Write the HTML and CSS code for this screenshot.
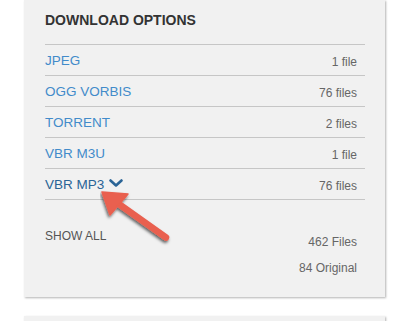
FILE: index.html
```html
<!DOCTYPE html>
<html lang="en">
<head>
    <meta charset="UTF-8">
    <meta name="viewport" content="width=device-width, initial-scale=1.0">
    <title>Download Options</title>
    <link rel="stylesheet" href="styles.css">
</head>
<body>
    <div class="card">
        <h2>DOWNLOAD OPTIONS</h2>
        <ul class="formats">
            <li><a href="#">JPEG</a><span class="count">1 file</span></li>
            <li><a href="#">OGG VORBIS</a><span class="count">76 files</span></li>
            <li><a href="#">TORRENT</a><span class="count">2 files</span></li>
            <li><a href="#">VBR M3U</a><span class="count">1 file</span></li>
            <li>
                <a href="#" class="open">VBR MP3
                    <svg class="chevron" width="14" height="9" viewBox="0 0 14 9">
                        <polyline points="1.5,1.5 7,6.5 12.5,1.5" fill="none" stroke="#2a6496" stroke-width="2.6" stroke-linecap="round" stroke-linejoin="round"/>
                    </svg>
                </a>
                <span class="count">76 files</span>
            </li>
        </ul>
        <div class="summary">
            <a href="#" class="show-all">SHOW ALL</a>
            <div class="totals">
                <div>462 Files</div>
                <div>84 Original</div>
            </div>
        </div>

        <!-- Annotation arrow -->
        <svg class="pointer" width="90" height="70" viewBox="0 0 90 70">
            <defs>
                <filter id="shade" x="-30%" y="-30%" width="160%" height="160%">
                    <feDropShadow dx="-1" dy="2" stdDeviation="1.6" flood-color="#000" flood-opacity="0.6"/>
                </filter>
            </defs>
            <g filter="url(#shade)" fill="#e9604f" stroke="#e9604f">
                <line x1="16" y1="12" x2="66" y2="47.5" stroke-width="6.5" stroke-linecap="round"/>
                <polygon points="2,2 28,4 10,25" stroke-width="1.5" stroke-linejoin="round"/>
            </g>
        </svg>
    </div>
    <div class="card next"></div>
</body>
</html>
```

FILE: styles.css
```css
* {
    margin: 0;
    padding: 0;
    box-sizing: border-box;
}

body {
    background-color: #fff;
    font-family: "Liberation Sans", Arial, sans-serif;
    color: #555;
}

.card {
    position: relative;
    width: 361px;
    margin-left: 24px;
    padding: 12px 20px 16px 21px;
    background-color: #f1f1f1;
    box-shadow: 1px 1px 2px rgba(0, 0, 0, 0.3);
}

.card.next {
    margin-top: 19px;
    height: 20px;
    padding: 0;
}

h2 {
    font-size: 14px;
    line-height: 16px;
    font-weight: bold;
    color: #333;
    margin-bottom: 16px;
}

.formats {
    list-style: none;
    border-top: 1px solid #c6c6c6;
}

.formats li {
    display: flex;
    justify-content: space-between;
    align-items: baseline;
    height: 31px;
    padding-top: 8px;
    border-bottom: 1px solid #c6c6c6;
}

.formats a {
    font-size: 13.5px;
    line-height: 16px;
    color: #428bca;
    text-decoration: none;
}

.formats a.open {
    color: #2a6496;
}

.chevron {
    margin-left: 1px;
    vertical-align: 1px;
}

.count {
    font-size: 12px;
    color: #666;
    padding-right: 8px;
    position: relative;
    top: 1px;
}

.summary {
    display: flex;
    justify-content: space-between;
    align-items: flex-start;
    padding-top: 28px;
}

.show-all {
    font-size: 12px;
    line-height: 16px;
    color: #555;
    text-decoration: none;
}

.totals {
    margin-top: 1px;
    padding-right: 8px;
    font-size: 12px;
    line-height: 26px;
    color: #666;
    text-align: right;
}

.pointer {
    position: absolute;
    left: 76px;
    top: 190px;
    pointer-events: none;
}
```
